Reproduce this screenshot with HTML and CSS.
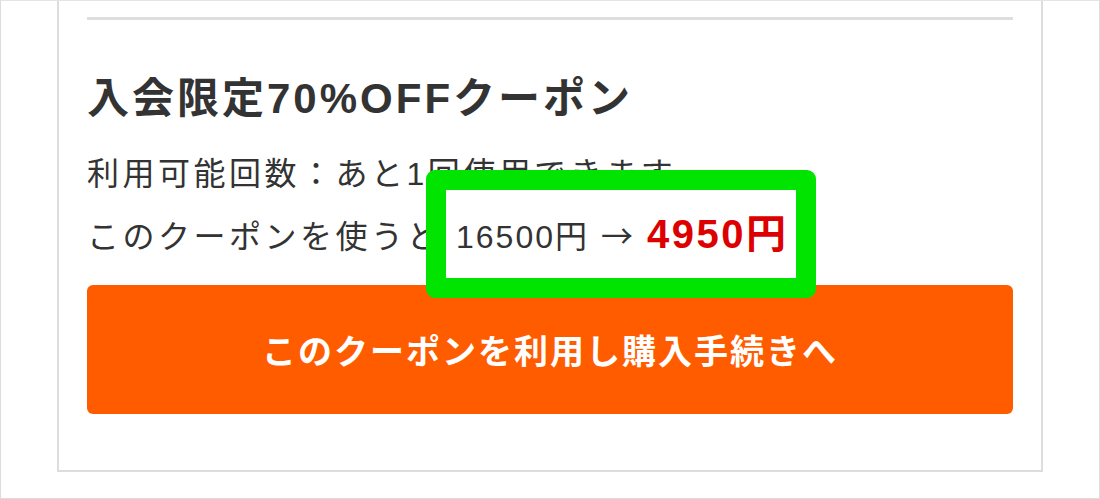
FILE: index.html
```html
<!DOCTYPE html>
<html lang="ja">
<head>
<meta charset="utf-8">
<title>入会限定クーポン</title>
<link rel="stylesheet" href="styles.css">
</head>
<body>
<div class="frame">
  <section class="coupon-card">
    <hr class="divider">
    <h2 class="coupon-title">入会限定70%OFFクーポン</h2>
    <p class="coupon-line">利用可能回数：あと1回使用できます</p>
    <p class="coupon-line">このクーポンを使うと<span class="price-callout"><span class="price-before">16500円</span><span class="arrow">→</span><span class="price-after">4950円</span></span></p>
    <button class="apply-btn" type="button">このクーポンを利用し購入手続きへ</button>
  </section>
</div>
</body>
</html>
```

FILE: styles.css
```css
* {
  box-sizing: border-box;
}

html,
body {
  margin: 0;
  padding: 0;
  background: #ffffff;
}

body {
  font-family: "Liberation Sans", "Noto Sans CJK JP", sans-serif;
  color: #333333;
}

.frame {
  width: 1100px;
  height: 499px;
  border: 1px solid #dcdcdc;
  border-top-color: #e4e4e4;
  padding: 0 56px 27px;
  overflow: hidden;
}

.coupon-card {
  border: 2px solid #dddddd;
  border-top: none;
  padding: 16px 28px 56px;
}

.divider {
  margin: 0;
  height: 3px;
  border: none;
  background: #dedede;
}

.coupon-title {
  margin: 51px 0 0;
  font-size: 42px;
  line-height: 56px;
  font-weight: 700;
  letter-spacing: 3px;
  color: #333333;
}

.coupon-line {
  margin: 0;
  font-size: 32px;
  line-height: 60px;
  letter-spacing: 3.5px;
  color: #333333;
}

.coupon-title + .coupon-line {
  margin-top: 17px;
}

/* highlighted price comparison, framed by a rounded green outline */
.price-callout {
  position: relative;
  z-index: 0;
  display: inline-block;
  margin-left: 14px;
  letter-spacing: 0;
}

.price-callout::before {
  content: "";
  position: absolute;
  top: -34px;
  bottom: -31px;
  left: -30px;
  right: -27px;
  background: #ffffff;
  border: 20px solid #00e400;
  border-radius: 9px;
  z-index: -1;
}

.price-before {
  font-size: 32px;
  letter-spacing: 2px;
}

.arrow {
  margin: 0 14px 0 12px;
  font-family: "Noto Sans CJK JP", sans-serif;
  font-size: 32px;
}

.price-after {
  font-size: 40px;
  font-weight: 700;
  letter-spacing: 2.5px;
  color: #dd0000;
}

.apply-btn {
  display: block;
  width: 100%;
  height: 129px;
  margin-top: 18px;
  padding: 0;
  border: none;
  border-radius: 6px;
  background: #ff5c00;
  color: #ffffff;
  font-family: "Liberation Sans", "Noto Sans CJK JP", sans-serif;
  font-size: 34px;
  font-weight: 700;
  letter-spacing: 2px;
  cursor: pointer;
}
```
